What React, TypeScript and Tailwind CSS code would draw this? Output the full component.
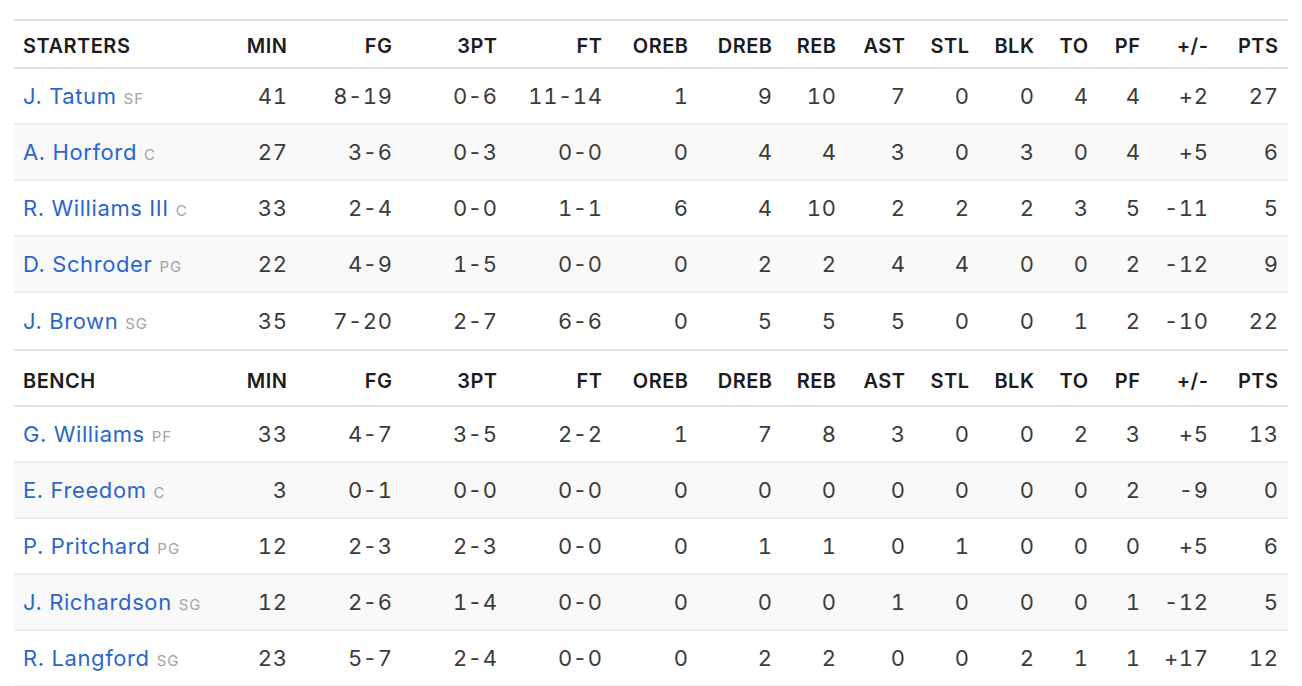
import React from "react";

type Player = { name: string; pos: string; s: (string | number)[] };

const starters: Player[] = [
  { name: "J. Tatum", pos: "SF", s: [41, "8-19", "0-6", "11-14", 1, 9, 10, 7, 0, 0, 4, 4, "+2", 27] },
  { name: "A. Horford", pos: "C", s: [27, "3-6", "0-3", "0-0", 0, 4, 4, 3, 0, 3, 0, 4, "+5", 6] },
  { name: "R. Williams III", pos: "C", s: [33, "2-4", "0-0", "1-1", 6, 4, 10, 2, 2, 2, 3, 5, "-11", 5] },
  { name: "D. Schroder", pos: "PG", s: [22, "4-9", "1-5", "0-0", 0, 2, 2, 4, 4, 0, 0, 2, "-12", 9] },
  { name: "J. Brown", pos: "SG", s: [35, "7-20", "2-7", "6-6", 0, 5, 5, 5, 0, 0, 1, 2, "-10", 22] },
];

const bench: Player[] = [
  { name: "G. Williams", pos: "PF", s: [33, "4-7", "3-5", "2-2", 1, 7, 8, 3, 0, 0, 2, 3, "+5", 13] },
  { name: "E. Freedom", pos: "C", s: [3, "0-1", "0-0", "0-0", 0, 0, 0, 0, 0, 0, 0, 2, "-9", 0] },
  { name: "P. Pritchard", pos: "PG", s: [12, "2-3", "2-3", "0-0", 0, 1, 1, 0, 1, 0, 0, 0, "+5", 6] },
  { name: "J. Richardson", pos: "SG", s: [12, "2-6", "1-4", "0-0", 0, 0, 0, 1, 0, 0, 0, 1, "-12", 5] },
  { name: "R. Langford", pos: "SG", s: [23, "5-7", "2-4", "0-0", 0, 2, 2, 0, 0, 2, 1, 1, "+17", 12] },
];

const cols = ["MIN", "FG", "3PT", "FT", "OREB", "DREB", "REB", "AST", "STL", "BLK", "TO", "PF", "+/-", "PTS"];
const widths = [
  "w-[87px]", "w-[105px]", "w-[105px]", "w-[105px]", "w-[86px]", "w-[84px]", "w-[64px]",
  "w-[69px]", "w-[64px]", "w-[65px]", "w-[54px]", "w-[52px]", "w-[68px]", "w-[70px]",
];

const font = { fontFamily: "Inter, 'Liberation Sans', sans-serif" };

function Header({ title, tall }: { title: string; tall?: boolean }) {
  return (
    <div
      className={`flex items-center border-y-2 border-[#e2e2e2] pl-[9px] pr-[8px] text-[20px] font-semibold tracking-[0.5px] text-[#1c1c1c] ${
        tall ? "h-[58px] pt-[5px]" : "h-[50px] pt-[4px]"
      }`}
    >
      <div className="w-[177px]">{title}</div>
      {cols.map((c, i) => (
        <div key={c} className={`${widths[i]} shrink-0 text-right`}>
          <span className="-mr-[0.5px]">{c}</span>
        </div>
      ))}
    </div>
  );
}

function Row({ p, idx, last }: { p: Player; idx: number; last: boolean }) {
  return (
    <div
      className={`flex h-[56px] items-center pl-[9px] pr-[8px] ${
        last ? "" : "border-b-2 border-[#ececec]"
      } ${idx % 2 === 1 ? "bg-[#f9f9f9]" : "bg-white"}`}
    >
      <div className="flex w-[177px] items-baseline whitespace-nowrap">
        <span className="text-[22px] tracking-[0.6px] text-[#2a66cc]">{p.name}</span>
        <span className="ml-[7px] text-[15px] tracking-[1px] text-[#a3a3a3]">{p.pos}</span>
      </div>
      {p.s.map((v, i) => (
        <div
          key={i}
          className={`${widths[i]} shrink-0 text-right text-[22px] tabular-nums tracking-[0.6px] text-[#3b3b3b]`}
        >
          <span className="-mr-[0.6px]">{v}</span>
        </div>
      ))}
    </div>
  );
}

export default function App() {
  return (
    <div className="min-h-[686px] bg-white px-[14px] pt-[19px]" style={font}>
      <Header title="STARTERS" />
      {starters.map((p, i) => (
        <Row key={p.name} p={p} idx={i} last={i === starters.length - 1} />
      ))}
      <Header title="BENCH" tall />
      {bench.map((p, i) => (
        <Row key={p.name} p={p} idx={i} last={false} />
      ))}
    </div>
  );
}
